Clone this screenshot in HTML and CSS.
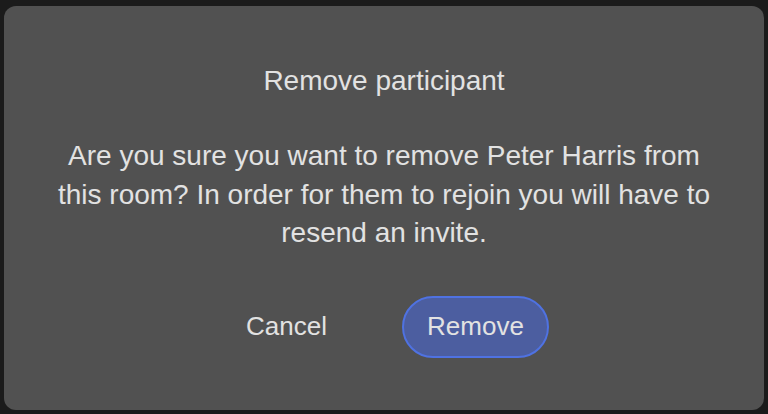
FILE: index.html
```html
<!DOCTYPE html>
<html lang="en">
<head>
<meta charset="utf-8">
<title>Remove participant</title>
<link rel="stylesheet" href="styles.css">
</head>
<body>
<div class="dialog" role="dialog" aria-labelledby="dlg-title">
  <h2 class="dialog-title" id="dlg-title">Remove participant</h2>
  <p class="dialog-text">Are you sure you want to remove Peter Harris from this room? In order for them to rejoin you will have to resend an invite.</p>
  <div class="dialog-actions">
    <button class="btn btn-cancel" type="button">Cancel</button>
    <button class="btn btn-primary" type="button">Remove</button>
  </div>
</div>
</body>
</html>
```
FILE: styles.css
```css
html, body {
  margin: 0;
  padding: 0;
  background: #1b1b1b;
  width: 768px;
  height: 414px;
  overflow: hidden;
}
body {
  padding: 6px 4px 4px 4px;
  box-sizing: border-box;
  font-family: "Liberation Sans", Arial, sans-serif;
  color: #e2e2e2;
}
.dialog {
  width: 760px;
  height: 404px;
  box-sizing: border-box;
  background: #515151;
  border-radius: 12px;
  display: flex;
  flex-direction: column;
  align-items: center;
  padding: 59px 48px 0;
}
.dialog-title {
  margin: 0;
  font-size: 28px;
  font-weight: normal;
  line-height: 32px;
}
.dialog-text {
  margin: 40px 0 0;
  font-size: 28px;
  line-height: 38.5px;
  text-align: center;
}
.dialog-actions {
  display: flex;
  gap: 42px;
  margin: 43px 6px 0 0;
}
.btn {
  width: 147px;
  height: 62px;
  box-sizing: border-box;
  border-radius: 31px;
  padding: 0;
  font-family: inherit;
  font-size: 26px;
  color: #e2e2e2;
  cursor: pointer;
}
.btn-cancel {
  background: transparent;
  border: 2px solid transparent;
}
.btn-primary {
  background: #4c5ea0;
  border: 2px solid #4f72e2;
}
```
